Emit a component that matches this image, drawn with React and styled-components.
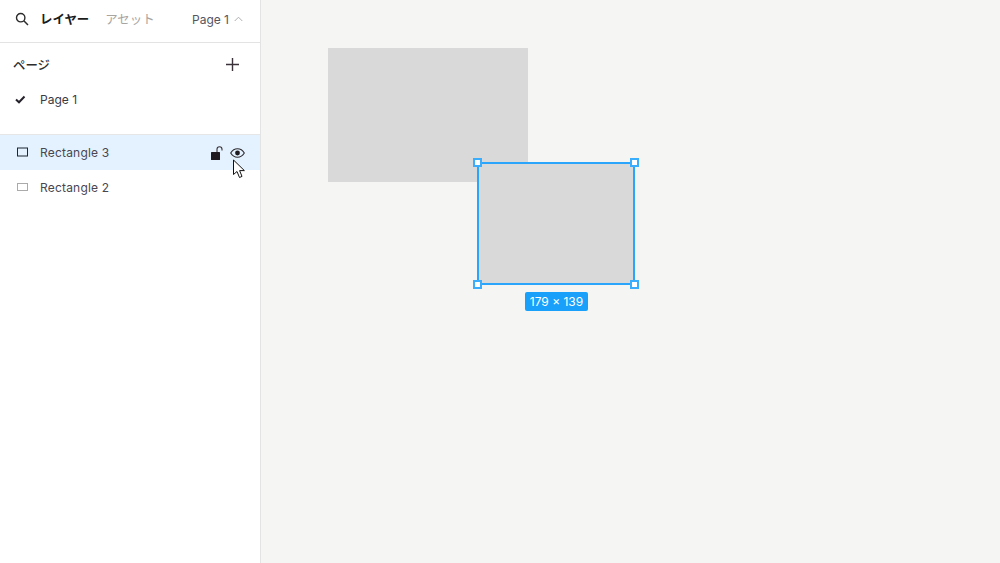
import styled, { createGlobalStyle } from "styled-components";

const textDark = "#2c2c2c";
const textMid = "#4a4650";
const blue = "#18a0fb";

const GlobalStyle = createGlobalStyle`
  html, body {
    margin: 0;
    padding: 0;
    height: 100%;
    overflow: hidden;
  }
  body {
    font-family: Inter, "Noto Sans CJK JP", sans-serif;
  }
`;

const Page = styled.div`
  display: flex;
  width: 1000px;
  height: 563px;
  background: #f5f5f3;
`;

const Sidebar = styled.aside`
  box-sizing: border-box;
  width: 261px;
  height: 563px;
  flex: none;
  background: #fff;
  border-right: 1px solid #e3e3e3;
`;

const TopBar = styled.div`
  box-sizing: border-box;
  display: flex;
  align-items: center;
  height: 43px;
  padding: 0 17px 4px 15px;
  border-bottom: 1px solid #e3e3e3;
`;

const Tab = styled.span`
  font-size: 12.4px;
  font-weight: ${(p) => (p.$active ? 600 : 400)};
  color: ${(p) => (p.$active ? "#1c1c1c" : "#a8a4a0")};
  margin-left: ${(p) => (p.$active ? "11px" : "16px")};
`;

const PagePicker = styled.div`
  display: flex;
  align-items: center;
  gap: 5px;
  margin-left: auto;
  font-size: 12px;
  color: #555560;
`;

const SectionHead = styled.div`
  display: flex;
  align-items: center;
  justify-content: space-between;
  height: 43px;
  padding: 0 21px 0 13px;
  font-size: 12.4px;
  font-weight: 500;
  color: ${textDark};
`;

const PageRow = styled.div`
  display: flex;
  align-items: center;
  height: 27px;
  padding-left: 15px;
  gap: 14px;
  font-size: 12px;
  color: #3a3a44;
`;

const Pages = styled.div`
  height: 48px;
  border-bottom: 1px solid #e6e6e6;
`;

const LayerRow = styled.div`
  display: flex;
  align-items: center;
  height: 35px;
  padding: 0 15px 0 17px;
  background: ${(p) => (p.$selected ? "#e3f2fe" : "#fff")};
`;

const LayerName = styled.span`
  margin-left: 12px;
  font-size: 12px;
  letter-spacing: 0.2px;
  color: ${textMid};
`;

const RowActions = styled.div`
  display: flex;
  align-items: center;
  gap: 6px;
  margin-left: auto;
`;

const Canvas = styled.main`
  position: relative;
  flex: 1;
`;

const Shape = styled.div`
  position: absolute;
  left: ${(p) => p.$x}px;
  top: ${(p) => p.$y}px;
  width: ${(p) => p.$w}px;
  height: ${(p) => p.$h}px;
  background: #d9d9d9;
`;

const Selection = styled(Shape)`
  box-sizing: border-box;
  border: 2px solid #2ba5fb;
`;

const Handle = styled.span`
  position: absolute;
  box-sizing: border-box;
  width: 9px;
  height: 9px;
  background: #fff;
  border: 2px solid #3aaefc;
  ${(p) => (p.$left ? "left: -6px;" : "right: -6px;")}
  ${(p) => (p.$top ? "top: -6px;" : "bottom: -6px;")}
`;

const SizeBadge = styled.div`
  position: absolute;
  left: 264px;
  top: 292px;
  width: 63px;
  height: 19px;
  border-radius: 2px;
  background: ${blue};
  color: #fff;
  font-size: 12px;
  line-height: 19px;
  text-align: center;
  white-space: nowrap;
`;

const Cursor = styled.svg`
  position: absolute;
  left: 232px;
  top: 159px;
`;

const SearchIcon = () => (
  <svg width="14" height="14" viewBox="0 0 14 14" fill="none">
    <circle cx="5.7" cy="5.7" r="4.2" stroke={textDark} strokeWidth="1.4" />
    <path d="M8.8 8.8L13 13" stroke={textDark} strokeWidth="1.5" />
  </svg>
);

const ChevronUp = () => (
  <svg width="9" height="6" viewBox="0 0 9 6" fill="none">
    <path d="M0.7 5L4.5 1.2L8.3 5" stroke="#b0aeb0" strokeWidth="1" />
  </svg>
);

const PlusIcon = () => (
  <svg width="13" height="13" viewBox="0 0 13 13" fill="none">
    <path d="M6.5 0V13M0 6.5H13" stroke="#3a3238" strokeWidth="1.4" />
  </svg>
);

const CheckIcon = () => (
  <svg width="11" height="9" viewBox="0 0 11 9" fill="none">
    <path d="M1 4.5L4 7.3L9.5 1.5" stroke="#26222c" strokeWidth="2" />
  </svg>
);

const RectIcon = ({ color, height }) => (
  <svg width="11" height="11" viewBox="0 0 11 11" fill="none">
    <rect x="0.5" y={(11 - height) / 2} width="10" height={height - 1} stroke={color} />
  </svg>
);

const LockIcon = () => (
  <svg width="13" height="14" viewBox="0 0 13 14" fill="none">
    <rect x="0" y="6" width="9" height="8" rx="0.5" fill="#1e1a20" />
    <path d="M6 6V3.2C6 1.8 7 0.8 8.5 0.8C10 0.8 11 1.8 11 3.2V4.5" stroke="#3a3238" strokeWidth="1.1" />
  </svg>
);

const EyeIcon = () => (
  <svg width="15" height="10" viewBox="0 0 15 10" fill="none">
    <path d="M0.7 5C2.4 2.2 4.7 0.8 7.5 0.8C10.3 0.8 12.6 2.2 14.3 5C12.6 7.8 10.3 9.2 7.5 9.2C4.7 9.2 2.4 7.8 0.7 5Z" stroke="#2c2830" strokeWidth="1.1" />
    <circle cx="7.5" cy="5" r="2.4" fill="#1e1a20" />
  </svg>
);

export default function App() {
  return (
    <Page>
      <GlobalStyle />
      <Sidebar>
        <TopBar>
          <SearchIcon />
          <Tab $active>レイヤー</Tab>
          <Tab>アセット</Tab>
          <PagePicker>
            Page 1
            <ChevronUp />
          </PagePicker>
        </TopBar>
        <SectionHead>
          ページ
          <PlusIcon />
        </SectionHead>
        <Pages>
          <PageRow>
            <CheckIcon />
            Page 1
          </PageRow>
        </Pages>
        <LayerRow $selected>
          <RectIcon color="#1c2733" height={9} />
          <LayerName>Rectangle 3</LayerName>
          <RowActions>
            <LockIcon />
            <EyeIcon />
          </RowActions>
        </LayerRow>
        <LayerRow>
          <RectIcon color="#aaa" height={8} />
          <LayerName>Rectangle 2</LayerName>
        </LayerRow>
      </Sidebar>
      <Canvas>
        <Shape $x={67} $y={48} $w={200} $h={134} />
        <Selection $x={216} $y={162} $w={158} $h={123}>
          <Handle $left $top />
          <Handle $top />
          <Handle $left />
          <Handle />
        </Selection>
        <SizeBadge>179 × 139</SizeBadge>
      </Canvas>
      <Cursor as="svg" width="14" height="20" viewBox="0 0 14 20">
        <path d="M1.5 1V15.5L5 12.5L7.5 18.5L10 17.4L7.6 11.6H12.4Z" fill="#fff" stroke="#111" strokeWidth="1" />
      </Cursor>
    </Page>
  );
}
